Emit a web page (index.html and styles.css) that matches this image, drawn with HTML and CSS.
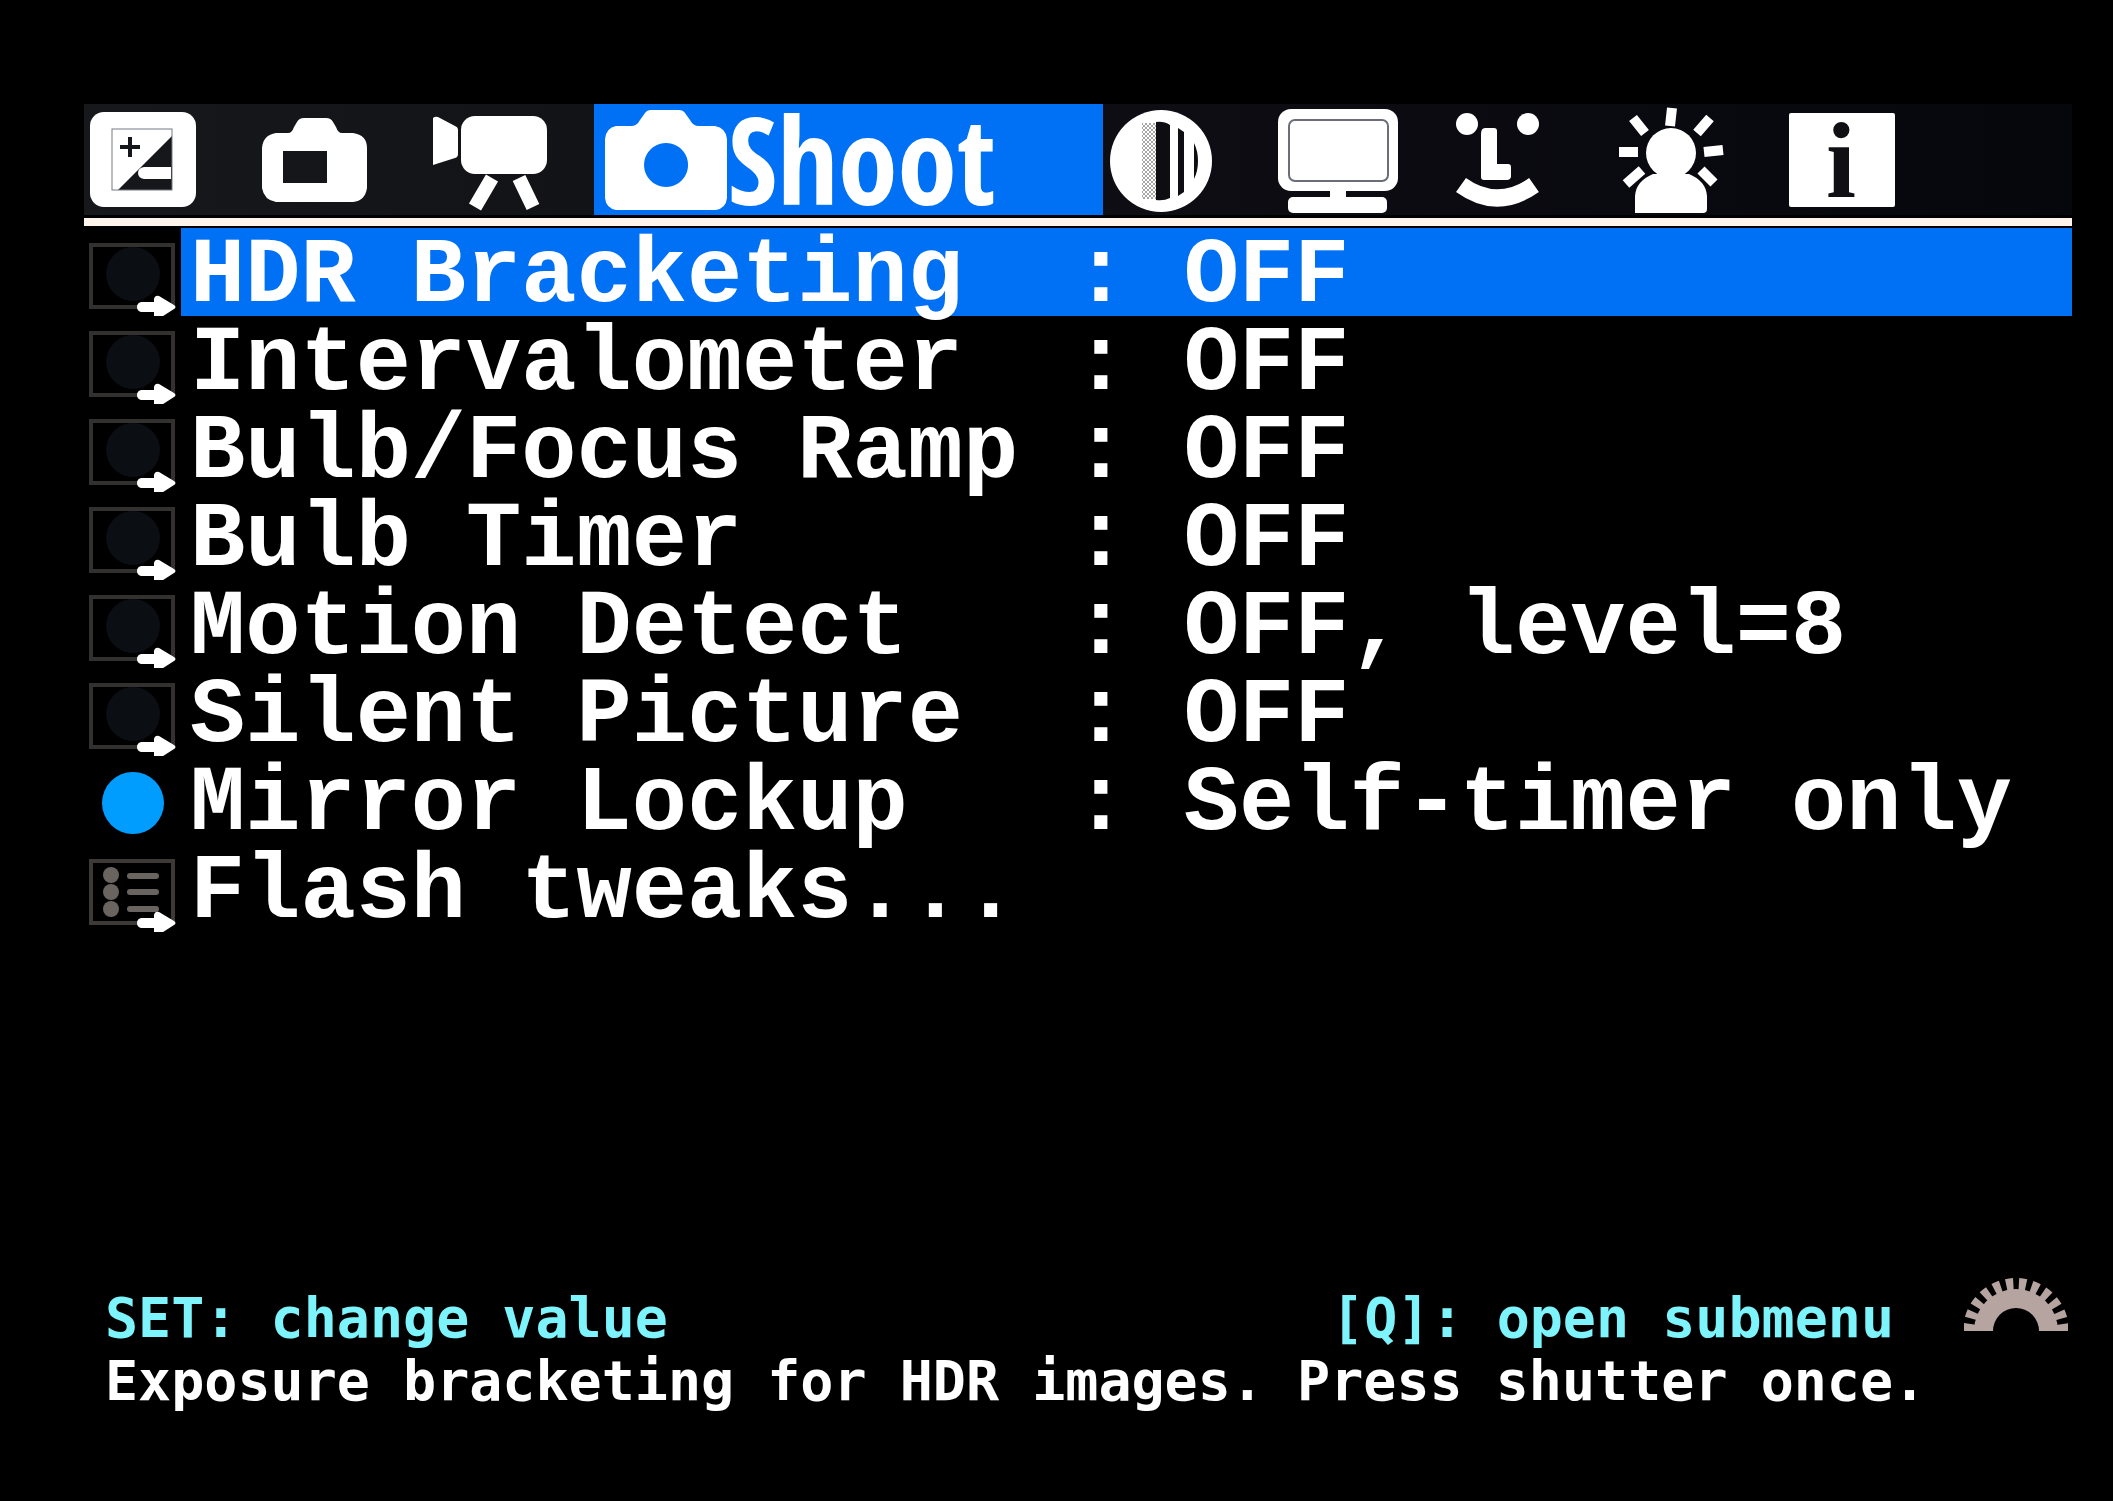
FILE: index.html
```html
<!DOCTYPE html>
<html lang="en">

<head>
    <meta charset="utf-8">
    <meta name="viewport" content="width=device-width, initial-scale=1.0">
    <title>Shoot</title>
    <link rel="stylesheet" href="styles.css">
</head>

<body>
    <!-- shared row icons -->
    <svg class="sprite" aria-hidden="true">
        <symbol id="arrow" viewBox="0 0 97 88">
            <path d="M57 74h13v-3q1-4 5-3l15 9q3 2 0 4l-14 9q-5 1-6-2v-4H57q-4-1-4-5t4-5z" fill="#fff" />
        </symbol>
        <symbol id="off" viewBox="0 0 97 88">
            <rect x="7" y="17" width="82" height="62" fill="none" stroke="#33312f" stroke-width="4" />
            <circle cx="49" cy="46" r="27" fill="#0b0e12" />
            <use href="#arrow" />
        </symbol>
        <symbol id="on" viewBox="0 0 97 88">
            <circle cx="49" cy="47" r="31" fill="#009dff" />
        </symbol>
        <symbol id="submenu" viewBox="0 0 97 88">
            <rect x="7" y="17" width="82" height="62" fill="none" stroke="#3d3937" stroke-width="4" />
            <g fill="#6a6461">
                <circle cx="27" cy="31" r="8" />
                <circle cx="27" cy="48" r="8" />
                <circle cx="27" cy="65" r="8" />
            </g>
            <path d="M46 32h26M46 48h26M46 65h26" stroke="#6a6461" stroke-width="6" stroke-linecap="round" />
            <use href="#arrow" />
        </symbol>
    </svg>

    <header>
        <nav class="tabs">
            <button class="tab" aria-label="Exposure">
                <svg viewBox="0 0 130 110">
                    <rect x="6" y="7" width="106" height="95" rx="14" fill="#fff" />
                    <path d="M88 31v54H34z" fill="#16171b" />
                    <rect x="28" y="24" width="60" height="61" fill="none" stroke="#777b88" stroke-width="1" />
                    <path d="M60 62h27v12H60q-6-1-6-6t6-6z" fill="#fff" />
                    <path d="M36 42h20M46 32v20" stroke="#16171b" stroke-width="4" />
                </svg>
            </button>
            <button class="tab" aria-label="Overlay">
                <svg viewBox="0 0 130 110">
                    <path d="M22 28h12q4 0 6-6l3-5q2-4 7-4h22q5 0 7 4l3 5q2 6 6 6h11q14 2 14 15v40q-2 13-14 14H22Q10 95 8 83V43q1-13 14-15zM29 46v32h44V46z" fill="#fff" fill-rule="evenodd" />
                </svg>
            </button>
            <button class="tab" aria-label="Movie">
                <svg viewBox="0 0 130 110">
                    <path d="M9 13q2-2 5-1l17 9q3 1 3 4v24q0 3-3 4L9 60z" fill="#fff" />
                    <rect x="37" y="11" width="86" height="58" rx="14" fill="#fff" />
                    <path d="M68 73L51 102M95 73l14 29" stroke="#fff" stroke-width="14" />
                </svg>
            </button>
            <button class="tab selected">
                <svg viewBox="0 0 134 110">
                    <path d="M22 22h15q6 0 9-6l5-7q2-3 6-3h28q4 0 6 3l5 7q3 6 9 6h16q11 2 12 13v59q-1 10-11 12H22q-10-2-11-12V35q1-11 11-13zM72 39a22 22 0 1 0 .1 0z" fill="#fff" fill-rule="evenodd" />
                </svg>
                <span>Shoot</span>
            </button>
            <button class="tab" aria-label="Expo tools">
                <svg viewBox="0 0 130 110">
                    <defs>
                        <pattern id="dither" width="4" height="4" patternUnits="userSpaceOnUse">
                            <path d="M0 1h2M2 3h2" stroke="#a4a7a4" stroke-width="2" />
                        </pattern>
                    </defs>
                    <circle cx="58" cy="56" r="51" fill="#fff" />
                    <path d="M39 18h14v76H39z" fill="url(#dither)" />
                    <path d="M53 17q8-1 14 3v73q-6 3-14 2zM75 23l6 4v60l-6 4zM91 38q4 8 4 18t-4 18z" fill="#0e0e12" />
                </svg>
            </button>
            <button class="tab" aria-label="Display">
                <svg viewBox="0 0 130 110">
                    <rect x="5" y="4" width="120" height="82" rx="13" fill="#fff" />
                    <rect x="16" y="15" width="99" height="61" rx="6" fill="none" stroke="#6b6e78" stroke-width="2" />
                    <path d="M57 86h16v11H57z" fill="#fff" />
                    <rect x="15" y="92" width="99" height="16" rx="5" fill="#fff" />
                </svg>
            </button>
            <button class="tab" aria-label="Preferences">
                <svg viewBox="0 0 130 110">
                    <circle cx="24" cy="19" r="11" fill="#fff" />
                    <circle cx="85" cy="19" r="11" fill="#fff" />
                    <path d="M42 23h9q3 0 3 3v33h11q3 0 3 3v10q-1 3-4 3H41q-3 0-3-3V29q0-6 4-6z" fill="#fff" />
                    <path d="M18 80q36 26 73 0" fill="none" stroke="#fff" stroke-width="17" />
                </svg>
            </button>
            <button class="tab" aria-label="Help">
                <svg viewBox="0 0 130 110">
                    <circle cx="58" cy="48" r="25" fill="#fff" />
                    <path d="M22 108V91q1-15 18-22h36q17 7 18 22v13q0 4-4 4z" fill="#fff" />
                    <path d="M59 3l-2 18M20 13l12 15M97 13L84 28M6 47h19M91 47l19-2M13 79l16-14M88 65l13 13" stroke="#fff" stroke-width="10" />
                </svg>
            </button>
            <button class="tab" aria-label="Info">
                <svg viewBox="0 0 130 110">
                    <rect x="6" y="8" width="106" height="94" rx="2" fill="#fff" />
                    <text class="info" x="58" y="92" text-anchor="middle">i</text>
                </svg>
            </button>
        </nav>
    </header>

    <main>
        <ul class="menu">
            <li>
                <button class="row selected">
                    <svg viewBox="0 0 97 88"><use href="#off" /></svg>
                    <span class="item"><span class="name">HDR Bracketing</span><span class="colon">:</span><span>OFF</span></span>
                </button>
            </li>
            <li>
                <button class="row">
                    <svg viewBox="0 0 97 88"><use href="#off" /></svg>
                    <span class="item"><span class="name">Intervalometer</span><span class="colon">:</span><span>OFF</span></span>
                </button>
            </li>
            <li>
                <button class="row">
                    <svg viewBox="0 0 97 88"><use href="#off" /></svg>
                    <span class="item"><span class="name">Bulb/Focus Ramp</span><span class="colon">:</span><span>OFF</span></span>
                </button>
            </li>
            <li>
                <button class="row">
                    <svg viewBox="0 0 97 88"><use href="#off" /></svg>
                    <span class="item"><span class="name">Bulb Timer</span><span class="colon">:</span><span>OFF</span></span>
                </button>
            </li>
            <li>
                <button class="row">
                    <svg viewBox="0 0 97 88"><use href="#off" /></svg>
                    <span class="item"><span class="name">Motion Detect</span><span class="colon">:</span><span>OFF, level=8</span></span>
                </button>
            </li>
            <li>
                <button class="row">
                    <svg viewBox="0 0 97 88"><use href="#off" /></svg>
                    <span class="item"><span class="name">Silent Picture</span><span class="colon">:</span><span>OFF</span></span>
                </button>
            </li>
            <li>
                <button class="row">
                    <svg viewBox="0 0 97 88"><use href="#on" /></svg>
                    <span class="item"><span class="name">Mirror Lockup</span><span class="colon">:</span><span>Self-timer only</span></span>
                </button>
            </li>
            <li>
                <button class="row">
                    <svg viewBox="0 0 97 88"><use href="#submenu" /></svg>
                    <span class="item"><span class="name">Flash tweaks...</span></span>
                </button>
            </li>
        </ul>
    </main>

    <footer>
        <div class="keys">
            <span>SET: change value</span>
            <span class="submenu">[Q]: open submenu</span>
            <svg class="dial" viewBox="0 0 104 58">
                <path d="M10 56a42 42 0 0 1 84 0H75a23 23 0 0 0-46 0z" fill="#b5a49f" />
                <path d="M6 56a46 46 0 0 1 92 0" fill="none" stroke="#b5a49f" stroke-width="14" stroke-dasharray="7 5.5" />
            </svg>
        </div>
        <p class="help">Exposure bracketing for HDR images. Press shutter once.</p>
    </footer>
</body>

</html>
```

FILE: styles.css
```css
* {
    box-sizing: border-box;
}

body {
    margin: 0;
    min-height: 100vh;
    padding: 104px 41px 88px 84px;
    display: flex;
    flex-direction: column;
    background: #000;
    color: #fff;
    font-family: "Liberation Mono", monospace;
    font-weight: bold;
}

button {
    margin: 0;
    padding: 0;
    border: 0;
    background: none;
    color: inherit;
    font: inherit;
    text-align: left;
    cursor: pointer;
}

svg {
    display: block;
    flex: none;
}

.sprite {
    position: absolute;
    width: 0;
    height: 0;
}

/* tab bar */
header {
    padding-bottom: 3px;
    border-bottom: 8px solid #fff4ec;
}

.tabs {
    display: grid;
    grid-template-columns: repeat(3, 10fr) 30fr repeat(5, 10fr) 7fr;
    background: linear-gradient(to right, #17181b, #0c0c12 60%, #06060d);
}

.tab {
    display: flex;
    align-items: center;
    height: 111px;
}

.tab svg {
    height: 110px;
    overflow: visible;
}

.tab.selected {
    background: #0070f5;
    font-family: "Liberation Sans Narrow", "Open Sans Condensed", "Liberation Sans", sans-serif;
    font-size: 120px;
    line-height: 108px;
    padding-bottom: 2px;
}

.info {
    font-family: "Liberation Serif", serif;
    font-size: 108px;
    font-weight: bold;
    fill: #101014;
}

/* menu rows */
.menu {
    margin: 0;
    padding: 2px 0 0;
    list-style: none;
}

.row {
    display: flex;
    width: 100%;
}

.row > svg {
    width: 97px;
    height: 88px;
}

.item {
    flex: 1;
    display: flex;
    height: 88px;
    padding: 10px 0 0 9px;
    font-size: 92px;
    line-height: 78px;
    white-space: nowrap;
}

.row.selected .item {
    background: #0070f5;
}

.name {
    width: 16ch;
}

.colon {
    width: 2ch;
}

/* key hints and help line */
footer {
    margin-top: auto;
    padding-left: 21px;
    font-family: "DejaVu Sans Mono", monospace;
    font-size: 55px;
    line-height: 63px;
}

.keys {
    display: flex;
    align-items: flex-end;
    color: #7df3fb;
}

.submenu {
    margin-left: auto;
}

.dial {
    width: 104px;
    height: 58px;
    margin: 0 4px 17px 70px;
}

.help {
    margin: 0;
}
```
